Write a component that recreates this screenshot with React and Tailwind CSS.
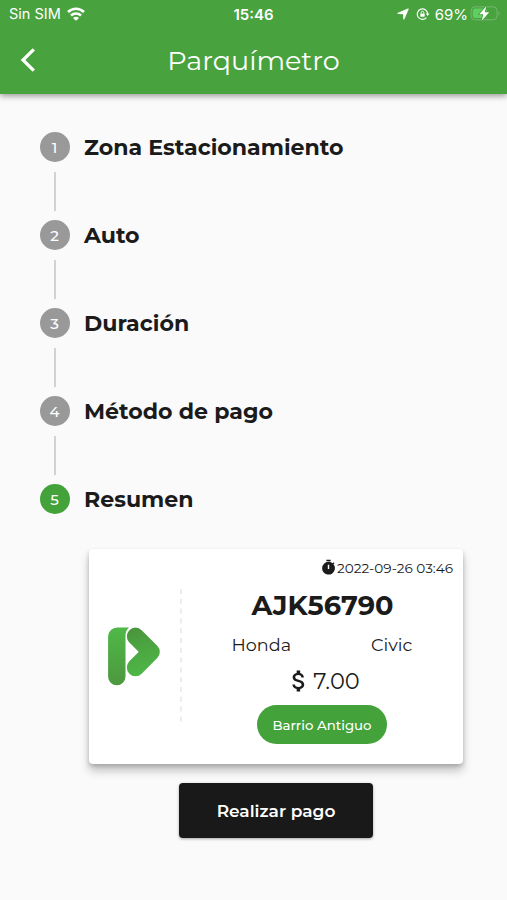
import React from 'react'
import { MdAttachMoney, MdTimer } from 'react-icons/md'

const steps = [
  { id: 1, title: 'Zona Estacionamiento' },
  { id: 2, title: 'Auto' },
  { id: 3, title: 'Duración' },
  { id: 4, title: 'Método de pago' },
  { id: 5, title: 'Resumen' },
]

const ticket = {
  date: '2022-09-26 03:46',
  plate: 'AJK56790',
  brand: 'Honda',
  model: 'Civic',
  price: '7.00',
  zone: 'Barrio Antiguo',
}

const WifiIcon = () => (
  <svg width="18" height="14" viewBox="0 0 18 14" fill="none" stroke="#fff" strokeWidth="2.5">
    <path d="M1 5 C5.6 .6 12.4 .6 17 5" />
    <path d="M4 8.5 C6.8 5.7 11.2 5.7 14 8.5" />
    <path d="M9 13.8 L6 10.9 C7.8 9.3 10.2 9.3 12 10.9 Z" fill="#fff" stroke="none" />
  </svg>
)

const LocationIcon = () => (
  <svg width="12" height="12" viewBox="0 0 12 12" fill="#fff">
    <path d="M10.8 .5 C11.4 .3 11.9 .7 11.6 1.4 L7.5 10.9 C7.2 11.7 6.2 11.6 6.2 10.7 L6.1 6.2 L1.3 6.1 C.3 6 .2 5.1 1 4.7 Z" />
  </svg>
)

const RotationLockIcon = () => (
  <svg width="14" height="12" viewBox="0 0 14 12" fill="none" stroke="#fff" strokeWidth="1.2">
    <path d="M10.4 9.6 A5.2 5.2 0 1 1 11.7 6" />
    <path d="M9.7 5.4 H13.5 L11.6 8 Z" fill="#fff" stroke="none" />
    <rect x="4.3" y="5.4" width="4.4" height="3.3" rx=".6" fill="#fff" stroke="none" />
    <path d="M5.2 5.6 V4.5 A1.3 1.3 0 0 1 7.8 4.5 V5.6" strokeWidth=".9" />
  </svg>
)

const BatteryIcon = () => (
  <svg width="31" height="16" viewBox="0 0 31 16">
    <rect x="1.1" y=".8" width="26" height="13" rx="4" fill="none" stroke="#76b86f" />
    <path d="M28.6 5.2 Q30.8 7.3 28.6 9.4 Z" fill="#76b86f" />
    <rect x="2.8" y="2.5" width="14" height="9.6" rx="2.4" fill="#5fcf61" />
    <path d="M16.3 .3 L9.3 8.3 H13.4 L11.7 14.7 L19.2 6.2 H14.7 Z" fill="#fff" stroke="#48a23e" strokeWidth="1.6" paintOrder="stroke" />
  </svg>
)

const BackIcon = () => (
  <svg className="ml-[20px]" width="16" height="26" viewBox="0 0 16 26" fill="none" stroke="#fff" strokeWidth="3.2">
    <path d="M13.8 2.3 L3 13 L13.8 23.7" />
  </svg>
)

const Logo = () => (
  <svg width="54" height="60" viewBox="0 0 54 60">
    <defs>
      <linearGradient id="stem" x1="0" y1="0" x2="0" y2="1">
        <stop offset="0" stopColor="#4fb848" />
        <stop offset="1" stopColor="#4d983e" />
      </linearGradient>
      <linearGradient id="arrow" gradientUnits="userSpaceOnUse" x1="26" y1="5" x2="36" y2="46">
        <stop offset="0" stopColor="#4c963d" />
        <stop offset=".5" stopColor="#4ba842" />
        <stop offset="1" stopColor="#4eb547" />
      </linearGradient>
    </defs>
    <path d="M10.5 1.4 H22 Q18.5 4.4 18.5 9.4 V50.6 A8.7 8.7 0 0 1 1.1 50.6 V10.4 A9 9 0 0 1 10.5 1.4 Z" fill="url(#stem)" />
    <path d="M28.5 10.3 L44.1 25.9 L28.5 41.5" fill="none" stroke="url(#arrow)" strokeWidth="17.4" strokeLinecap="round" strokeLinejoin="round" />
  </svg>
)

const StatusBar = () => (
  <div className="grid h-7 grid-cols-[1fr_auto_1fr] items-center pr-[6px] pl-[9px] font-['Inter',sans-serif] leading-none text-white">
    <div className="flex items-center gap-[6px]">
      <span className="text-[14.5px]">Sin SIM</span>
      <WifiIcon />
    </div>
    <span className="pr-[3px] text-[15px] font-semibold">15:46</span>
    <div className="flex items-center justify-end">
      <LocationIcon />
      <span className="ml-[7px]"><RotationLockIcon /></span>
      <span className="ml-[5px] text-[15px]">69%</span>
      <span className="ml-[2px]"><BatteryIcon /></span>
    </div>
  </div>
)

const Step = ({ step, active, last }) => (
  <div className={last ? 'h-[30px]' : 'h-[88px]'}>
    <div className="flex h-[30px] items-center gap-[14.5px]">
      <div className={`flex size-[30px] items-center justify-center rounded-full pt-px text-[15px] font-medium text-white ${active ? 'bg-[#43a239]' : 'bg-[#999999]'}`}>
        {step.id}
      </div>
      <h2 className="pt-px text-[22.1px] leading-none font-bold whitespace-nowrap text-[#1b1b1b]">{step.title}</h2>
    </div>
    {!last && <div className="mt-[10px] ml-[14px] h-[39px] w-[2px] bg-[#d2d2d2]" />}
  </div>
)

const TicketCard = () => (
  <div className="mt-[34.6px] ml-[89px] flex h-[215px] w-[374px] rounded-[4px] bg-white text-[#1b1b1b] shadow-[0_7px_10px_rgba(0,0,0,0.22),0_2px_4px_rgba(0,0,0,0.18)]">
    <div className="w-[91px] shrink-0 pt-[77px] pl-[18px]">
      <Logo />
    </div>
    <svg className="mt-[40px] shrink-0" width="2" height="134" viewBox="0 0 2 134">
      <path d="M1 0 V134" stroke="#e6e6e6" strokeWidth="1.5" strokeDasharray="5 4.8" />
    </svg>
    <div className="flex flex-1 flex-col items-center">
      <div className="mt-[10px] flex h-[18px] items-center self-end pr-[10px]">
        <MdTimer size={17} />
        <span className="pt-px text-[13.6px] leading-none">{ticket.date}</span>
      </div>
      <h1 className="mt-[15px] text-[27.2px] leading-[28px] font-bold">{ticket.plate}</h1>
      <div className="mt-[14px] flex h-[22px] w-full justify-center gap-[80px] pr-[1px] text-[17.6px] leading-[22px]">
        <span>{ticket.brand}</span>
        <span>{ticket.model}</span>
      </div>
      <div className="mt-[12px] flex h-[26px] items-center text-[22.5px] leading-[26px]">
        <MdAttachMoney size={28} />
        <span>{ticket.price}</span>
      </div>
      <div className="mt-[11.5px] mr-px flex h-[39px] w-[130px] items-center justify-center rounded-full bg-[#43a239] pt-px text-[13.3px] font-medium text-white">
        {ticket.zone}
      </div>
    </div>
  </div>
)

const App = () => {
  return (
    <div className="h-[900px] w-full overflow-hidden bg-[#fafafa] font-['Montserrat','Inter',sans-serif]">
      {/* Header */}
      <header className="h-[94px] bg-[#48a23e] shadow-[0_2px_6px_rgba(0,0,0,0.4)]">
        <StatusBar />
        <div className="grid h-[64px] grid-cols-[1fr_auto_1fr] items-center text-white">
          <BackIcon />
          <h1 className="text-[27px] leading-none font-normal">Parquímetro</h1>
        </div>
      </header>

      {/* Steps */}
      <div className="mt-[38.4px] pl-[39.5px]">
        {steps.map((step, index) => (
          <Step key={step.id} step={step} active={step.id === 5} last={index === steps.length - 1} />
        ))}
      </div>

      <TicketCard />

      <button className="mt-[19px] ml-[179px] block h-[55px] w-[194px] rounded-[4px] bg-[#191919] pt-[2px] text-[17px] font-semibold text-white shadow-[0_1px_3px_rgba(0,0,0,0.35)]">
        Realizar pago
      </button>
    </div>
  )
}

export default App
